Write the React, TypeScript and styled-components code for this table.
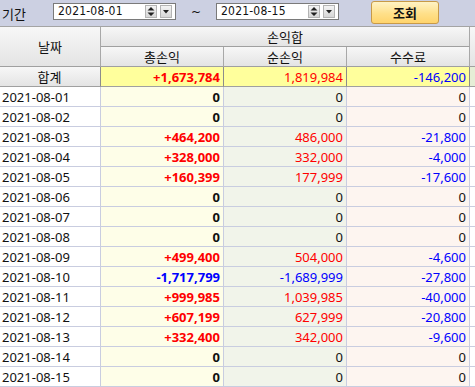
import React from "react";
import styled, { createGlobalStyle } from "styled-components";

const Global = createGlobalStyle`
  html, body { margin: 0; padding: 0; background: #ffffff; }
  body { font-family: "Noto Sans", "Noto Sans CJK KR", sans-serif; overflow: hidden; }
`;

const Page = styled.div`
  width: 475px;
  height: 387px;
  overflow: hidden;
  display: flex;
  flex-direction: column;
`;

const Toolbar = styled.div`
  height: 26px;
  flex: none;
  background: #ccd0e2;
  border-bottom: 1px solid #a4a4a4;
  display: flex;
  align-items: center;
  font-family: "Noto Sans CJK KR", sans-serif;
  font-size: 13px;
  color: #111;
`;

const Label = styled.span`
  margin-left: 2px;
  width: 51px;
`;

const DateBox = styled.div`
  width: 117px;
  height: 15px;
  background: #fff;
  border: 1px solid #7a7a7a;
  display: flex;
  align-items: center;
  margin-top: -3px;
  padding-left: 4px;
  box-sizing: content-box;
`;

const DateText = styled.span`
  flex: 1;
  font-family: "DejaVu Sans Condensed", "DejaVu Sans", sans-serif;
  font-size: 12px;
  letter-spacing: 0.2px;
  line-height: 15px;
`;

const SmallBtn = styled.span`
  width: 10px;
  height: 11px;
  margin-right: 3px;
  background: linear-gradient(#f4f4f4, #d6d6d6);
  border: 1px solid #b4b4b4;
  display: flex;
  align-items: center;
  justify-content: center;
`;

const Tilde = styled.span`
  width: 40px;
  text-align: center;
  font-family: "DejaVu Sans", sans-serif;
  font-size: 12px;
  margin-top: -3px;
`;

const SearchBtn = styled.button`
  margin-left: 32px;
  margin-top: -2px;
  width: 68px;
  height: 23px;
  border: 1px solid #c89a48;
  border-radius: 3px;
  background: linear-gradient(#fff3c4, #ffe08a 55%, #ffd46c);
  font-family: "Noto Sans CJK KR", sans-serif;
  font-weight: 700;
  font-size: 13px;
  color: #111;
  padding: 0;
`;

const COLS = "101px 123px 123px 123px 1fr";

const Header = styled.div`
  display: grid;
  grid-template-columns: ${COLS};
  grid-template-rows: 20px 20px;
  flex: none;
  font-family: "Noto Sans CJK KR", sans-serif;
  font-size: 13px;
  color: #111;
`;

const HeadCell = styled.div<{ $col: string; $row: string; $noRight?: boolean }>`
  grid-column: ${(p) => p.$col};
  grid-row: ${(p) => p.$row};
  background: linear-gradient(#f7f7f7, #e4e4e4);
  border-bottom: 1px solid #a0a0a0;
  border-right: ${(p) => (p.$noRight ? "none" : "1px solid #a8a8a8")};
  display: flex;
  align-items: center;
  justify-content: center;
  line-height: 1;
`;

const Row = styled.div<{ $sum?: boolean }>`
  display: grid;
  grid-template-columns: ${COLS};
  height: 20px;
  flex: none;
`;

type Kind = "date" | "total" | "net" | "fee" | "extra";

const bgFor = (k: Kind, sum?: boolean) => {
  if (sum) {
    if (k === "date") return "linear-gradient(#f7f7f7, #e4e4e4)";
    if (k === "extra") return "#e6eed6";
    return "#ffff9c";
  }
  switch (k) {
    case "date":
      return "#ffffff";
    case "total":
      return "#fefee8";
    case "net":
      return "#f1f4ea";
    case "fee":
      return "#fdf5f0";
    default:
      return "#ffffff";
  }
};

const Cell = styled.div<{ $kind: Kind; $sum?: boolean; $color?: string; $bold?: boolean }>`
  background: ${(p) => bgFor(p.$kind, p.$sum)};
  border-right: 1px solid ${(p) => (p.$sum ? "#8c8c8c" : "#c9cde0")};
  border-bottom: 1px solid ${(p) => (p.$sum ? "#a0a0a0" : "#c9cde0")};
  display: flex;
  align-items: center;
  justify-content: ${(p) => (p.$kind === "date" ? (p.$sum ? "center" : "flex-start") : "flex-end")};
  padding: 0 3px 0 2px;
  font-family: ${(p) =>
    p.$kind === "date" && p.$sum ? '"Noto Sans CJK KR", sans-serif' : '"Noto Sans", sans-serif'};
  font-size: 13px;
  font-weight: ${(p) => (p.$bold ? 700 : 400)};
  color: ${(p) => p.$color || "#111"};
  white-space: nowrap;
  overflow: hidden;
`;

const RED = "#ff0000";
const BLUE = "#0000ff";

type Rec = { d: string; t: number; n: number; f: number };

const data: Rec[] = [
  { d: "2021-08-01", t: 0, n: 0, f: 0 },
  { d: "2021-08-02", t: 0, n: 0, f: 0 },
  { d: "2021-08-03", t: 464200, n: 486000, f: -21800 },
  { d: "2021-08-04", t: 328000, n: 332000, f: -4000 },
  { d: "2021-08-05", t: 160399, n: 177999, f: -17600 },
  { d: "2021-08-06", t: 0, n: 0, f: 0 },
  { d: "2021-08-07", t: 0, n: 0, f: 0 },
  { d: "2021-08-08", t: 0, n: 0, f: 0 },
  { d: "2021-08-09", t: 499400, n: 504000, f: -4600 },
  { d: "2021-08-10", t: -1717799, n: -1689999, f: -27800 },
  { d: "2021-08-11", t: 999985, n: 1039985, f: -40000 },
  { d: "2021-08-12", t: 607199, n: 627999, f: -20800 },
  { d: "2021-08-13", t: 332400, n: 342000, f: -9600 },
  { d: "2021-08-14", t: 0, n: 0, f: 0 },
  { d: "2021-08-15", t: 0, n: 0, f: 0 },
];

const fmt = (v: number, plus: boolean) => {
  const s = Math.abs(v).toLocaleString("en-US");
  if (v > 0) return (plus ? "+" : "") + s;
  if (v < 0) return "-" + s;
  return "0";
};
const colorOf = (v: number) => (v > 0 ? RED : v < 0 ? BLUE : "#111");

const Spin = () => (
  <svg width="8" height="9" viewBox="0 0 8 9">
    <path d="M4 0 L7.5 3.5 H0.5 Z M4 9 L7.5 5.5 H0.5 Z" fill="#222" />
  </svg>
);
const Down = () => (
  <svg width="6" height="4" viewBox="0 0 6 4">
    <path d="M0 0 H6 L3 3.5 Z" fill="#222" />
  </svg>
);

const DateField = ({ value }: { value: string }) => (
  <DateBox>
    <DateText>{value}</DateText>
    <SmallBtn>
      <Spin />
    </SmallBtn>
    <SmallBtn>
      <Down />
    </SmallBtn>
  </DateBox>
);

export default function App() {
  return (
    <Page>
      <Global />
      <Toolbar>
        <Label>기간</Label>
        <DateField value="2021-08-01" />
        <Tilde>~</Tilde>
        <DateField value="2021-08-15" />
        <SearchBtn>조회</SearchBtn>
      </Toolbar>
      <Header>
        <HeadCell $col="1" $row="1 / 3">
          날짜
        </HeadCell>
        <HeadCell $col="2 / 5" $row="1">
          손익합
        </HeadCell>
        <HeadCell $col="5" $row="1 / 3" $noRight />
        <HeadCell $col="2" $row="2">
          총손익
        </HeadCell>
        <HeadCell $col="3" $row="2">
          순손익
        </HeadCell>
        <HeadCell $col="4" $row="2">
          수수료
        </HeadCell>
      </Header>
      <Row $sum>
        <Cell $kind="date" $sum>
          합계
        </Cell>
        <Cell $kind="total" $sum $bold $color={RED}>
          +1,673,784
        </Cell>
        <Cell $kind="net" $sum $color={RED}>
          1,819,984
        </Cell>
        <Cell $kind="fee" $sum $color={BLUE}>
          -146,200
        </Cell>
        <Cell $kind="extra" $sum />
      </Row>
      {data.map((r) => (
        <Row key={r.d}>
          <Cell $kind="date">{r.d}</Cell>
          <Cell $kind="total" $bold $color={colorOf(r.t)}>
            {fmt(r.t, true)}
          </Cell>
          <Cell $kind="net" $color={colorOf(r.n)}>
            {fmt(r.n, false)}
          </Cell>
          <Cell $kind="fee" $color={colorOf(r.f)}>
            {fmt(r.f, false)}
          </Cell>
          <Cell $kind="extra" />
        </Row>
      ))}
    </Page>
  );
}
